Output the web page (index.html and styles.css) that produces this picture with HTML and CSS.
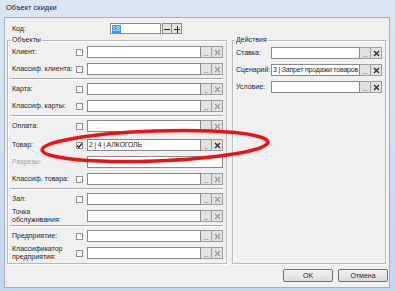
FILE: index.html
```html
<!DOCTYPE html>
<html>
<head>
    <meta charset="utf-8">
    <title>Объект скидки</title>
    <link rel="stylesheet" href="styles.css">
</head>
<body>
<div class="window">
    <div class="titlebar">Объект скидки</div>
    <div class="client">
        <div class="code-row">
            <span class="code-label">Код:</span>
            <span class="code-input"><span class="sel">18</span></span>
            <span class="spin"><svg width="8" height="8" viewBox="0 0 8 8"><path d="M1 4.5H7" stroke="#222" stroke-width="1"/></svg></span>
            <span class="spin"><svg width="8" height="8" viewBox="0 0 8 8"><path d="M1 4.5H7M4.5 1V8" stroke="#222" stroke-width="1"/></svg></span>
        </div>

        <div class="groups">
            <!-- Объекты -->
            <fieldset class="group objects">
                <legend>Объекты</legend>
                <div class="row"><span class="label">Клиент:</span><span class="check"></span><span class="field"></span><span class="btn dots">...</span><span class="btn clear"><svg width="7" height="7" viewBox="0 0 7 7"><path d="M1 1L6 6M6 1L1 6"/></svg></span></div>
                <div class="row"><span class="label">Классиф. клиента:</span><span class="check"></span><span class="field"></span><span class="btn dots">...</span><span class="btn clear"><svg width="7" height="7" viewBox="0 0 7 7"><path d="M1 1L6 6M6 1L1 6"/></svg></span></div>
                <div class="sep"></div>
                <div class="row"><span class="label">Карта:</span><span class="check"></span><span class="field"></span><span class="btn dots">...</span><span class="btn clear"><svg width="7" height="7" viewBox="0 0 7 7"><path d="M1 1L6 6M6 1L1 6"/></svg></span></div>
                <div class="row"><span class="label">Классиф. карты:</span><span class="check"></span><span class="field"></span><span class="btn dots">...</span><span class="btn clear"><svg width="7" height="7" viewBox="0 0 7 7"><path d="M1 1L6 6M6 1L1 6"/></svg></span></div>
                <div class="sep"></div>
                <div class="row row-wide"><span class="label">Оплата:</span><span class="check"></span><span class="field"></span><span class="btn dots">...</span><span class="btn clear"><svg width="7" height="7" viewBox="0 0 7 7"><path d="M1 1L6 6M6 1L1 6"/></svg></span></div>
                <div class="row"><span class="label">Товар:</span><span class="check checked"><svg width="7" height="7" viewBox="0 0 7 7"><path d="M1 3.5L2.8 5.3L6 1.5" fill="none" stroke="#222" stroke-width="1.3"/></svg></span><span class="field">2 | 4 | АЛКОГОЛЬ</span><span class="btn dots">...</span><span class="btn clear on"><svg width="7" height="7" viewBox="0 0 7 7"><path d="M1 1L6 6M6 1L1 6"/></svg></span></div>
                <div class="row"><span class="label disabled">Разрезы:</span><span class="check none"></span><span class="field"></span></div>
                <div class="row"><span class="label">Классиф. товара:</span><span class="check"></span><span class="field"></span><span class="btn dots">...</span><span class="btn clear"><svg width="7" height="7" viewBox="0 0 7 7"><path d="M1 1L6 6M6 1L1 6"/></svg></span></div>
                <div class="sep"></div>
                <div class="row"><span class="label">Зал:</span><span class="check"></span><span class="field"></span><span class="btn dots">...</span><span class="btn clear"><svg width="7" height="7" viewBox="0 0 7 7"><path d="M1 1L6 6M6 1L1 6"/></svg></span></div>
                <div class="row"><span class="label">Точка<br>обслуживания:</span><span class="check none"></span><span class="field"></span><span class="btn dots">...</span><span class="btn clear"><svg width="7" height="7" viewBox="0 0 7 7"><path d="M1 1L6 6M6 1L1 6"/></svg></span></div>
                <div class="sep"></div>
                <div class="row"><span class="label">Предприятие:</span><span class="check"></span><span class="field"></span><span class="btn dots">...</span><span class="btn clear"><svg width="7" height="7" viewBox="0 0 7 7"><path d="M1 1L6 6M6 1L1 6"/></svg></span></div>
                <div class="row"><span class="label">Классификатор<br>предприятия:</span><span class="check"></span><span class="field"></span><span class="btn dots">...</span><span class="btn clear"><svg width="7" height="7" viewBox="0 0 7 7"><path d="M1 1L6 6M6 1L1 6"/></svg></span></div>
            </fieldset>

            <!-- Действия -->
            <fieldset class="group actions">
                <legend>Действия</legend>
                <div class="row"><span class="label">Ставка:</span><span class="field"></span><span class="btn dots">...</span><span class="btn clear on"><svg width="7" height="7" viewBox="0 0 7 7"><path d="M1 1L6 6M6 1L1 6"/></svg></span></div>
                <div class="row"><span class="label">Сценарий:</span><span class="field">3 | Запрет продажи товаров</span><span class="btn dots">...</span><span class="btn clear on"><svg width="7" height="7" viewBox="0 0 7 7"><path d="M1 1L6 6M6 1L1 6"/></svg></span></div>
                <div class="row"><span class="label">Условие:</span><span class="field"></span><span class="btn dots">...</span><span class="btn clear on"><svg width="7" height="7" viewBox="0 0 7 7"><path d="M1 1L6 6M6 1L1 6"/></svg></span></div>
            </fieldset>
        </div>

        <div class="buttons">
            <span class="button">OK</span>
            <span class="button">Отмена</span>
        </div>
    </div>

    <!-- пометка поверх диалога -->
    <svg class="mark" width="395" height="291" viewBox="0 0 395 291">
        <ellipse cx="155" cy="146" rx="113" ry="15" fill="none" stroke="#ee1111" stroke-width="3.5" transform="rotate(-2 155 146)"/>
    </svg>
</div>
</body>
</html>
```

FILE: styles.css
```css
* {
    box-sizing: border-box;
}
html, body {
    margin: 0;
    padding: 0;
}
body {
    font-family: "Liberation Sans", "DejaVu Sans", sans-serif;
    font-size: 7px;
    color: #1e1e1e;
    width: 395px;
    height: 291px;
    overflow: hidden;
}
.window {
    position: relative;
    width: 395px;
    height: 291px;
    padding: 0 5px 3px 4px;
    background: linear-gradient(#dbe6f3, #c4d6ec);
}
.titlebar {
    height: 17px;
    line-height: 16px;
    padding-left: 2px;
    font-size: 7.5px;
    color: #1a1a1a;
}
.client {
    height: 271px;
    background: #f0f0f0;
    border: 1px solid #a3b0be;
    padding: 5px 3px 0 2px;
}

/* Код */
.code-row {
    display: flex;
    align-items: center;
    height: 11px;
    padding-left: 5px;
}
.code-label {
    width: 98px;
}
.code-input {
    width: 51px;
    height: 11px;
    background: #fff;
    border: 1px solid #8a8a8a;
    padding: 1px 0 0 1px;
}
.sel {
    display: inline-block;
    width: 9px;
    height: 8px;
    line-height: 8px;
    background: #3399ff;
    color: #e8f2ff;
}
.spin {
    display: flex;
    align-items: center;
    justify-content: center;
    width: 10px;
    height: 11px;
    margin-left: 1px;
    background: #e4e4e4;
    border: 1px solid #8a8a8a;
}
.spin + .spin {
    margin-left: 0;
    border-left: 0;
}

/* группы */
.groups {
    display: flex;
    gap: 5px;
    margin-top: 2px;
}
.group {
    margin: 0;
    min-width: 0;
    border: 1px solid #b9b9b9;
    box-shadow: 1px 1px 0 #fff, inset 1px 1px 0 #fff;
}
.group legend {
    padding: 0 1px;
    margin-left: -1px;
    line-height: 8px;
}
.objects {
    width: 220px;
    padding: 2px 3px 0 4px;
}
.actions {
    width: 154px;
    padding: 3px 3px 0 3px;
}
.row {
    display: flex;
    align-items: center;
    height: 12px;
    margin-bottom: 5px;
}
.row:last-child {
    margin-bottom: 4px;
}
.row-wide {
    margin-bottom: 7px;
}
.label {
    width: 64px;
    line-height: 8px;
    white-space: nowrap;
}
.actions .label {
    width: 35px;
}
.label.disabled {
    color: #a5a5a5;
}
.check {
    display: flex;
    align-items: center;
    justify-content: center;
    width: 7px;
    height: 7px;
    margin-right: 4px;
    background: #fff;
    border: 1px solid #8e8f8f;
}
.check svg {
    margin: -1px;
}
.check.none {
    visibility: hidden;
}
.field {
    flex: 1;
    height: 12px;
    line-height: 10px;
    padding-left: 1px;
    background: #fff;
    border: 1px solid #8a8a8a;
    white-space: nowrap;
    overflow: hidden;
    letter-spacing: -0.2px;
}
.btn {
    display: flex;
    width: 11px;
    height: 12px;
    background: #e2e2e2;
    border: 1px solid #9c9c9c;
    border-left: 0;
}
.dots {
    align-items: flex-end;
    justify-content: center;
    line-height: 7px;
    color: #555;
    letter-spacing: -0.5px;
}
.clear {
    align-items: center;
    justify-content: center;
    stroke: #9a9a9a;
    stroke-width: 1.1;
}
.clear.on {
    stroke: #2a2a2a;
    stroke-width: 1.3;
}
.sep {
    height: 2px;
    border-top: 1px solid #a8a8a8;
    border-bottom: 1px solid #fff;
    margin: -2px 0 3px -2px;
}

/* кнопки */
.buttons {
    display: flex;
    justify-content: flex-end;
    gap: 5px;
    margin: 5px -2px 0 0;
}
.button {
    width: 50px;
    height: 13px;
    line-height: 11px;
    text-align: center;
    border: 1px solid #707070;
    border-radius: 2px;
    background: linear-gradient(#f4f4f4, #dcdcdc);
}

.mark {
    position: absolute;
    left: 0;
    top: 0;
    pointer-events: none;
}
```
